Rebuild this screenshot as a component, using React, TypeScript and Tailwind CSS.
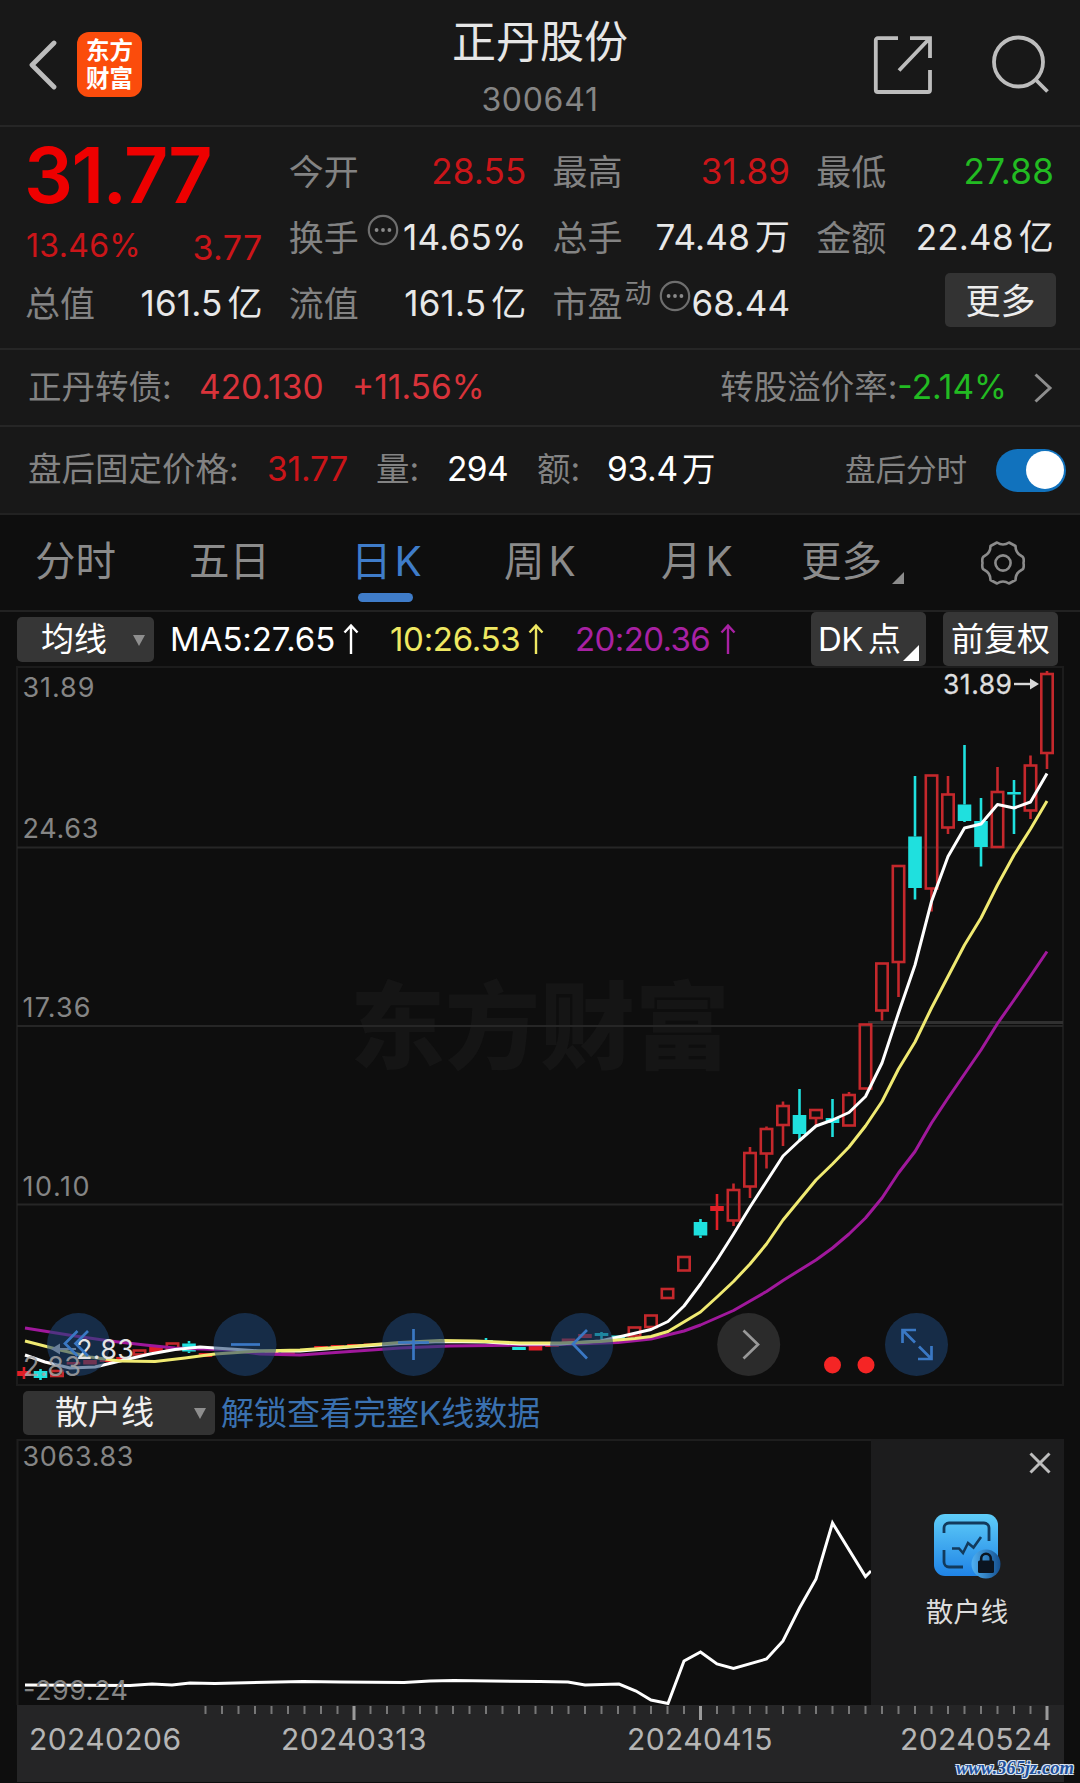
import React from "react"

type Candle = {
  // bars back from the latest trading day
  k: number
  tone: "up" | "down" | "flat"
  top: number
  bottom: number
  high?: number
  low?: number
}

const LAST_X = 1047
const STEP = 16.5

const candles: Candle[] = [
  { k: 0, tone: "up", top: 674, bottom: 753, high: 671, low: 769 },
  { k: 1, tone: "up", top: 765.5, bottom: 810.5, high: 755.5, low: 819 },
  { k: 2, tone: "down", top: 792, bottom: 794.5, high: 780, low: 834 },
  { k: 3, tone: "up", top: 792, bottom: 847, high: 767 },
  { k: 4, tone: "down", top: 821, bottom: 847, high: 798, low: 866.5 },
  { k: 5, tone: "down", top: 804.5, bottom: 821, high: 745, low: 822 },
  { k: 6, tone: "up", top: 794.5, bottom: 827.5, high: 776, low: 834 },
  { k: 7, tone: "up", top: 775.5, bottom: 888.5, low: 911.5 },
  { k: 8, tone: "down", top: 836.5, bottom: 888, high: 776, low: 899.5 },
  { k: 9, tone: "up", top: 866, bottom: 962, low: 997 },
  { k: 10, tone: "up", top: 963.5, bottom: 1010.5, low: 1020.5 },
  { k: 11, tone: "up", top: 1024.5, bottom: 1088.5 },
  { k: 12, tone: "up", top: 1095, bottom: 1125.5, high: 1092 },
  { k: 13, tone: "down", top: 1118, bottom: 1123, high: 1099, low: 1137 },
  { k: 14, tone: "up", top: 1110, bottom: 1118, low: 1125 },
  { k: 15, tone: "down", top: 1115, bottom: 1134, high: 1089, low: 1140 },
  { k: 16, tone: "up", top: 1106, bottom: 1125, high: 1101.5, low: 1146 },
  { k: 17, tone: "up", top: 1129, bottom: 1153.5, high: 1126.5, low: 1168.5 },
  { k: 18, tone: "up", top: 1153, bottom: 1186.5, high: 1147, low: 1198 },
  { k: 19, tone: "up", top: 1190, bottom: 1220.5, high: 1183.5, low: 1226 },
  { k: 20, tone: "flat", top: 1206, bottom: 1211, high: 1194, low: 1230 },
  { k: 21, tone: "down", top: 1222, bottom: 1235.5, high: 1219, low: 1238 },
  { k: 22, tone: "up", top: 1257, bottom: 1270.5 },
  { k: 23, tone: "up", top: 1289, bottom: 1298 },
  { k: 24, tone: "up", top: 1315.5, bottom: 1327 },
  { k: 25, tone: "up", top: 1327.5, bottom: 1336 },
  { k: 26, tone: "down", top: 1335.5, bottom: 1339.5 },
  { k: 27, tone: "down", top: 1333, bottom: 1336, high: 1332, low: 1339 },
  { k: 28, tone: "flat", top: 1334, bottom: 1338 },
  { k: 29, tone: "flat", top: 1338.5, bottom: 1342 },
  { k: 30, tone: "flat", top: 1344, bottom: 1347 },
  { k: 31, tone: "flat", top: 1345, bottom: 1350.5 },
  { k: 32, tone: "down", top: 1347, bottom: 1350 },
  { k: 34, tone: "down", top: 1340, bottom: 1342, high: 1338 },
  { k: 38, tone: "down", top: 1341.5, bottom: 1344, high: 1340 },
  { k: 39, tone: "flat", top: 1341, bottom: 1345 },
  { k: 41, tone: "flat", top: 1343.5, bottom: 1346 },
  { k: 42, tone: "flat", top: 1344, bottom: 1346.5 },
  { k: 43, tone: "flat", top: 1345, bottom: 1348 },
  { k: 44, tone: "flat", top: 1346, bottom: 1349 },
  { k: 46, tone: "flat", top: 1352.5, bottom: 1356 },
  { k: 47, tone: "flat", top: 1352, bottom: 1355 },
  { k: 51, tone: "flat", top: 1353, bottom: 1357 },
  { k: 52, tone: "down", top: 1343.5, bottom: 1351.5, high: 1341, low: 1353 },
  { k: 53, tone: "up", top: 1343.5, bottom: 1349 },
  { k: 54, tone: "flat", top: 1347, bottom: 1352 },
  { k: 55, tone: "up", top: 1350.5, bottom: 1354.5 },
  { k: 56, tone: "flat", top: 1357, bottom: 1360 },
  { k: 57, tone: "flat", top: 1359, bottom: 1362 },
  { k: 58, tone: "flat", top: 1360, bottom: 1364.5 },
  { k: 59, tone: "flat", top: 1362, bottom: 1364.5 },
  { k: 60, tone: "up", top: 1371, bottom: 1376 },
  { k: 61, tone: "down", top: 1371, bottom: 1378, high: 1369, low: 1380 },
  { k: 62, tone: "flat", top: 1371, bottom: 1376, high: 1367, low: 1379 }
]

const ma5: [number, number][] = [
  [25, 1355], [45, 1362], [70, 1368], [95, 1367], [120, 1361], [150, 1354], [175, 1349.5], [200, 1347],
  [230, 1349], [260, 1351], [300, 1351], [350, 1347], [400, 1343.5], [440, 1341.5], [485, 1342],
  [520, 1344], [560, 1344], [600, 1341], [623, 1336], [651, 1329.5], [668, 1321.5], [684, 1306],
  [700.5, 1284], [717, 1260], [733.5, 1234], [750, 1207], [766.5, 1181.5], [783, 1156], [799.5, 1140.5],
  [816, 1126], [832.5, 1120], [849, 1112.5], [865.5, 1096.5], [882, 1063], [898.5, 1013], [915, 965],
  [931.5, 901.5], [948, 856.5], [964.5, 828], [981, 824], [997.5, 804.5], [1014, 808], [1030.5, 802],
  [1047, 773.5]
]

const ma10: [number, number][] = [
  [25, 1341], [60, 1350], [90, 1357], [120, 1361], [155, 1361.5], [185, 1358], [215, 1354], [260, 1351],
  [300, 1350], [350, 1346.5], [400, 1342.5], [440, 1340.5], [475, 1341], [520, 1343], [560, 1343],
  [600, 1341.5], [635, 1338.5], [651, 1336.5], [668, 1331.5], [700.5, 1312], [717, 1297],
  [733.5, 1281.5], [750, 1264], [766.5, 1244], [783, 1220], [799.5, 1200], [816, 1180], [832.5, 1164],
  [849, 1147], [865.5, 1126], [882, 1101.5], [898.5, 1069], [915, 1042], [931.5, 1008], [948, 976.5],
  [964.5, 945], [981, 918], [997.5, 885], [1014, 855], [1030.5, 829], [1047, 801]
]

const ma20: [number, number][] = [
  [25, 1328], [75, 1336], [110, 1341], [145, 1345], [175, 1348], [230, 1350], [260, 1354], [300, 1355],
  [350, 1351.5], [400, 1348], [450, 1346], [520, 1345], [560, 1344.5], [618, 1342.5], [651, 1339],
  [684, 1331], [700.5, 1325], [733.5, 1310.5], [766.5, 1291.5], [783, 1280.5], [816, 1260],
  [832.5, 1248], [849, 1234], [865.5, 1218], [882, 1198], [898.5, 1173], [915, 1151.5], [931.5, 1123],
  [948, 1098], [964.5, 1074], [981, 1050], [997.5, 1023.5], [1014, 1000], [1030.5, 976], [1047, 951.5]
]

const retail: [number, number][] = [
  [25, 1685], [130, 1685.5], [152, 1684], [172, 1685], [190, 1683], [215, 1683.5], [303, 1681.5],
  [340, 1682], [404, 1682.5], [430, 1681], [454, 1680.5], [540, 1681.5], [568, 1682], [585, 1685],
  [619, 1684], [636, 1691], [651, 1700], [668, 1703.5], [684, 1661], [700.5, 1652], [717, 1664],
  [733.5, 1668.5], [766.5, 1659], [783, 1641], [799.5, 1608], [816, 1579], [832.5, 1523],
  [865.5, 1576.5], [871, 1571]
]

const toPoints = (pts: [number, number][]) => pts.map((p) => p.join(",")).join(" ")

function CandleShape({ c }: { c: Candle }) {
  const x = LAST_X - c.k * STEP
  const color = c.tone === "up" ? "#c4282c" : c.tone === "down" ? "#1fe0de" : "#e01f26"
  const hollow = c.tone === "up"
  return (
    <g stroke={color} strokeWidth="2.6" fill="none">
      {c.high !== undefined && <path d={`M${x} ${c.high}V${c.top}`} />}
      {c.low !== undefined && <path d={`M${x} ${c.bottom}V${c.low}`} />}
      {hollow ? (
        <rect x={x - 5.7} y={c.top} width="11.4" height={c.bottom - c.top} />
      ) : (
        <rect x={x - 6.8} y={c.top} width="13.6" height={c.bottom - c.top} fill={color} stroke="none" />
      )}
    </g>
  )
}

function MoreDots() {
  return (
    <svg viewBox="0 0 32 32" className="h-8 w-8 shrink-0" fill="none">
      <circle cx="16" cy="16" r="14.2" stroke="#6e6e6e" strokeWidth="2.2" />
      <g fill="#8a8a8a">
        <circle cx="9.6" cy="16" r="1.9" />
        <circle cx="16" cy="16" r="1.9" />
        <circle cx="22.4" cy="16" r="1.9" />
      </g>
    </svg>
  )
}

function Caret({ className }: { className: string }) {
  return (
    <svg viewBox="0 0 12 12" className={className}>
      <path d="M0 1h12L6 12z" fill="#8e8e8e" />
    </svg>
  )
}

function Header() {
  return (
    <header className="flex h-[127px] items-start justify-between border-b-2 border-[#262626]">
      <div className="flex w-[300px] items-center pt-8 pl-7">
        <svg viewBox="0 0 30 50" className="mr-[19px] h-[50px] w-[30px]" fill="none">
          <path d="M26 3L4 25L26 47" stroke="#bcbcbc" strokeWidth="4.8" strokeLinecap="round" strokeLinejoin="round" />
        </svg>
        <div className="flex h-[65px] w-[65px] flex-col items-center justify-center rounded-[12px] bg-[#fb4c0c] text-[23.5px] leading-[28px] font-bold text-white">
          <span>东方</span>
          <span>财富</span>
        </div>
      </div>
      <div className="flex flex-col items-center pt-5">
        <div className="text-[44px] leading-[44px] text-[#e6e6e6]">正丹股份</div>
        <div className="mt-5 text-[32px] leading-8 tracking-[0.7px] text-[#858585]">300641</div>
      </div>
      <div className="flex w-[300px] justify-end pt-[34px] pr-[30px]">
        <svg viewBox="0 0 60 60" className="mr-[58px] h-[60px] w-[60px]" fill="none" stroke="#bdbdbd" strokeWidth="3.8">
          <path d="M26 4.2H5.8a2 2 0 0 0-2 2V56a2 2 0 0 0 2 2H56a2 2 0 0 0 2-2V36" />
          <path d="M38 4.2H58V24M57.5 4.5L27 36.5" />
        </svg>
        <svg viewBox="0 0 60 60" className="h-[60px] w-[60px]" fill="none" stroke="#bdbdbd" strokeWidth="3.8">
          <circle cx="28.5" cy="28" r="24.5" />
          <path d="M45.5 45.5L57.5 57.5" />
        </svg>
      </div>
    </header>
  )
}

function Field({ label, value, tone }: { label: React.ReactNode; value: React.ReactNode; tone?: string }) {
  return (
    <div className="flex h-[66px] items-center justify-between text-[35px] leading-none">
      <span className="-ml-px flex items-center pt-[2px] text-[#838383]">{label}</span>
      <span className={`whitespace-nowrap tracking-[0.2px] [word-spacing:-5px] ${tone ?? "text-[#e8e8e8]"}`}>{value}</span>
    </div>
  )
}

function Quote() {
  return (
    <section className="flex h-[223px] gap-[27px] border-b-2 border-[#262626] pt-[11px] pr-[26px] pl-[26px]">
      <div className="flex w-[237px] flex-col">
        <div className="-ml-[2px] flex h-[75px] items-center text-[77px] leading-none font-semibold tracking-[-1.5px] text-[#ee0000]">
          31.77
        </div>
        <div className="flex h-[66px] items-center justify-between text-[32px] leading-none text-[#cb1519]">
          <span className="tracking-[0.3px]">13.46%</span>
          <span className="pt-[3px] text-[34px] tracking-[0.4px]">3.77</span>
        </div>
        <div className="-mt-[9px]">
          <Field label="总值" value="161.5 亿" />
        </div>
      </div>
      <div className="w-[237px]">
        <Field label="今开" value="28.55" tone="text-[#cb1519]" />
        <Field
          label={
            <>
              换手
              <span className="-mt-4 ml-2">
                <MoreDots />
              </span>
            </>
          }
          value="14.65%"
        />
        <Field label="流值" value="161.5 亿" />
      </div>
      <div className="w-[237px]">
        <Field label="最高" value="31.89" tone="text-[#cb1519]" />
        <Field label="总手" value="74.48 万" />
        <Field
          label={
            <>
              市盈
              <span className="-mt-[22px] ml-[2px] text-[27px]">动</span>
              <span className="-mt-4 ml-[7px]">
                <MoreDots />
              </span>
            </>
          }
          value="68.44"
        />
      </div>
      <div className="w-[237px]">
        <Field label="最低" value="27.88" tone="text-[#22bb22]" />
        <Field label="金额" value="22.48 亿" />
        <div className="flex justify-end pt-[3px]">
          <button type="button" className="-mr-[2px] h-[54px] w-[111px] rounded-[5px] bg-[#333333] pt-[2px] text-[35px] leading-none text-[#ededed]">
            更多
          </button>
        </div>
      </div>
    </section>
  )
}

function BondRow() {
  return (
    <section className="flex h-[77px] items-center border-b-2 border-[#262626] pr-[27px] pl-7 text-[33.5px] leading-none whitespace-nowrap text-[#838383]">
      <span className="w-[171px]">正丹转债:</span>
      <span className="w-[153px] text-[#d9333a]">420.130</span>
      <span className="text-[#d9333a]">+11.56%</span>
      <span className="ml-auto">转股溢价率:</span>
      <span className="text-[#22bb22]">-2.14%</span>
      <svg viewBox="0 0 20 30" className="ml-[26px] h-[30px] w-5" fill="none">
        <path d="M2.5 1.5L17 15L2.5 28.5" stroke="#8e8e8e" strokeWidth="3" />
      </svg>
    </section>
  )
}

function AfterHoursRow() {
  return (
    <section className="flex h-[88px] items-center border-b-2 border-[#222222] pr-[14px] pl-7 text-[33.5px] leading-none whitespace-nowrap text-[#838383]">
      <span className="w-[239px]">盘后固定价格:</span>
      <span className="w-[109px] tracking-[-0.2px] text-[#cb1519]">31.77</span>
      <span className="w-[71px]">量:</span>
      <span className="w-[90px] tracking-[-0.6px] text-white">294</span>
      <span className="w-[70px]">额:</span>
      <span className="tracking-[-0.3px] text-white [word-spacing:-5px]">93.4 万</span>
      <span className="ml-auto text-[30.5px]">盘后分时</span>
      <div className="ml-[29px] flex h-[43px] w-[70px] items-center justify-end rounded-full bg-[#1172bd] pr-[2px]">
        <div className="h-[38px] w-[38px] rounded-full bg-white" />
      </div>
    </section>
  )
}

function Tabs() {
  return (
    <nav className="flex h-[97px] items-center border-b-2 border-[#222222] pl-[35px] text-[40.5px] leading-none whitespace-nowrap text-[#8b8b8b]">
      <span className="w-[154px]">分时</span>
      <span className="w-[162px]">五日</span>
      <span className="relative w-[153px] text-[#3f7cc9]">
        日<span className="ml-[3px]">K</span>
        <span className="absolute top-[51px] left-[7px] h-[9px] w-[55px] rounded-full bg-[#3f7cc9]" />
      </span>
      <span className="w-[157px]">
        周<span className="ml-[4px]">K</span>
      </span>
      <span className="w-[140px]">
        月<span className="ml-[4px]">K</span>
      </span>
      <span>更多</span>
      <svg viewBox="0 0 12 12" className="mt-[30px] ml-[10px] h-3 w-3">
        <path d="M12 0V12H0z" fill="#8b8b8b" />
      </svg>
      <svg viewBox="0 0 46 46" className="ml-[76px] h-[46px] w-[46px]" fill="none" stroke="#8b8b8b" strokeWidth="2.6" strokeLinejoin="round">
        <path d="M17 2.5Q23 6.5 29 2.5L35.5 6Q35.5 13 41.500 16Q44.500 17 43.500 23Q44.500 29 41.500 30Q35.500 33 35.500 40L29 43.500Q23 39.500 17 43.500L10.500 40Q10.500 33 4.500 30Q1.500 29 2.500 23Q1.500 17 4.500 16Q10.500 13 10.500 6Z" />
        <circle cx="23" cy="23" r="7.6" />
      </svg>
    </nav>
  )
}

function UpArrow() {
  return (
    <svg viewBox="0 0 16 32" className="absolute top-0 right-0 h-8 w-4" fill="none" stroke="currentColor" strokeWidth="2.4">
      <path d="M8 31V3M1.500 9.500L8 2.500L14.500 9.500" />
    </svg>
  )
}

function IndicatorBar() {
  return (
    <section className="flex h-[54px] items-center pl-[17px] text-[33px] leading-8 whitespace-nowrap text-white">
      <div className="flex h-[45px] w-[137px] items-center rounded-[5px] bg-[#363636] pl-6">
        均线
        <Caret className="mt-[2px] ml-[26px] h-3 w-3" />
      </div>
      <div className="relative ml-4 w-[189px] tracking-[-0.1px]">
        MA5:27.65
        <UpArrow />
      </div>
      <div className="relative ml-[31px] w-[154px] tracking-[-0.3px] text-[#efe862]">
        10:26.53
        <UpArrow />
      </div>
      <div className="relative ml-[31px] w-[161px] tracking-[-0.6px] text-[#a821a3]">
        20:20.36
        <UpArrow />
      </div>
      <div className="relative ml-[75px] flex h-[54px] w-[115px] items-center rounded-[5px] bg-[#363636] pl-[7px] tracking-[-0.5px]">
        DK<span className="ml-[5px]">点</span>
        <svg viewBox="0 0 16 16" className="absolute right-[7px] bottom-[5px] h-4 w-4">
          <path d="M16 0V16H0z" fill="#fff" />
        </svg>
      </div>
      <div className="ml-[17px] flex h-[54px] w-[115px] items-center justify-center rounded-[5px] bg-[#363636]">前复权</div>
    </section>
  )
}

function KLineChart() {
  const axis = [
    { y: 687, v: "31.89", w: 72 },
    { y: 828, v: "24.63", w: 76 },
    { y: 1006.5, v: "17.36", w: 68 },
    { y: 1186, v: "10.10", w: 67 }
  ]
  return (
    <svg viewBox="0 666 1080 720" className="block h-[720px] w-[1080px]" fontFamily="Inter">
      <text x="350" y="1062" fontSize="95" fontWeight="900" fill="#151515" fontFamily="Noto Sans CJK SC" textLength="380">
        东方财富
      </text>
      <g stroke="#262626" strokeWidth="2" fill="none">
        <path d="M17 667H1063V1385H17z" stroke="#1c1c1c" />
        <path d="M17 847.5H1063M17 1026H1063M17 1204.5H1063" />
        <path d="M868 1022.5H1063" stroke="#303030" strokeWidth="3" />
      </g>
      <g fontSize="27" fill="#858585">
        {axis.map((a) => (
          <text key={a.v} x="22.5" y={a.y + 10} textLength={a.w}>
            {a.v}
          </text>
        ))}
      </g>
      {candles.map((c) => (
        <CandleShape key={c.k} c={c} />
      ))}
      <g fill="none" strokeWidth="3" strokeLinejoin="round">
        <polyline points={toPoints(ma20)} stroke="#a0189c" />
        <polyline points={toPoints(ma5)} stroke="#ffffff" />
        <polyline points={toPoints(ma10)} stroke="#f0ea72" />
      </g>
      <text x="943" y="693.5" fontSize="26.5" fill="#dedede" stroke="#dedede" strokeWidth="0.3" textLength="69">
        31.89
      </text>
      <path d="M1014 684H1032" stroke="#d8d8d8" strokeWidth="2.4" />
      <path d="M1030 678.5L1039 684L1030 689.5z" fill="#d8d8d8" />
      <path d="M60 1349H76" stroke="#cfcfcf" strokeWidth="2" />
      <path d="M60 1343.5L51 1349L60 1354.5z" fill="#cfcfcf" />

      <g fill="#1d4372" fillOpacity="0.58">
        <circle cx="78.5" cy="1344.5" r="31.5" />
        <circle cx="245" cy="1344.5" r="31.5" />
        <circle cx="413.5" cy="1344.5" r="31.5" />
        <circle cx="581.7" cy="1344.5" r="31.5" />
        <circle cx="916.5" cy="1344.5" r="31.5" />
      </g>
      <text x="76" y="1359" fontSize="27" fill="#e4e4e4" textLength="58">
        2.83
      </text>
      <circle cx="748.7" cy="1344.5" r="31.5" fill="#2b2b2b" />
      <g fill="none" stroke="#3a78c4" strokeWidth="2.7">
        <path d="M77.5 1331L65 1343.5L77.5 1356M88 1331L75.5 1343.5L88 1356" />
        <path d="M231 1344.5H260" />
        <path d="M398 1342.5H429M413.5 1329V1360" />
        <path d="M587 1330L573 1344L587 1358.5" />
        <path d="M902.5 1343V1330H916M903 1330.5L915 1342.5M918 1359H931.5V1346M931 1358.5L919 1346.5" />
      </g>
      <path d="M743.5 1330.5L758 1344.5L743.5 1358.5" fill="none" stroke="#999999" strokeWidth="2.7" />
      <circle cx="832.5" cy="1365" r="8.5" fill="#f52525" />
      <circle cx="866" cy="1365" r="8.5" fill="#f52525" />
      <text x="23" y="1375.5" fontSize="27" fill="#a6a6a6" fillOpacity="0.85" textLength="58">
        2.83
      </text>
    </svg>
  )
}

function LockedBar() {
  return (
    <section className="flex h-[53px] items-center pl-[23px] text-[33px] leading-none whitespace-nowrap">
      <div className="flex h-11 w-[192px] items-center rounded-[5px] bg-[#333333] pl-8 text-[#f0f0f0]">
        散户线
        <Caret className="ml-[40px] h-3 w-3" />
      </div>
      <span className="ml-[6px] pt-px text-[#3a71b0]">解锁查看完整K线数据</span>
    </section>
  )
}

function RetailChart() {
  return (
    <section className="flex h-[266px]">
      <svg viewBox="0 1439 871 266" className="block h-[266px] w-[871px]" fontFamily="Inter">
        <path d="M17.5 1705V1440H871" fill="none" stroke="#1e1e1e" strokeWidth="2" />
        <polyline points={toPoints(retail)} fill="none" stroke="#ffffff" strokeWidth="3" />
        <g fontSize="27" fill="#858585">
          <text x="22.5" y="1466" textLength="111">
            3063.83
          </text>
          <text x="23" y="1699.5" textLength="105">
            -299.24
          </text>
        </g>
      </svg>
      <div className="relative flex w-[193px] flex-col items-center bg-[#1c1c1d] pt-[72px] pr-[1px]">
        <svg viewBox="0 0 22 22" className="absolute top-[13px] right-[13px] h-[22px] w-[22px]" stroke="#bdbdbd" strokeWidth="3">
          <path d="M1.5 1.5L20.5 20.5M20.5 1.5L1.5 20.5" />
        </svg>
        <svg viewBox="0 0 68 68" className="h-[68px] w-[68px]" fill="none">
          <defs>
            <linearGradient id="tile" x1="0" y1="0" x2="0" y2="1">
              <stop offset="0" stopColor="#5fcdf8" />
              <stop offset="1" stopColor="#1f83e6" />
            </linearGradient>
            <linearGradient id="badge" x1="0" y1="0" x2="1" y2="0">
              <stop offset="0" stopColor="#4fb0f2" />
              <stop offset="1" stopColor="#155090" />
            </linearGradient>
          </defs>
          <rect x="1" y="3" width="64" height="62" rx="11" fill="url(#tile)" />
          <g stroke="#123a5c" strokeWidth="2.8">
            <path d="M11 22V17a5 5 0 0 1 5-5H51a5 5 0 0 1 5 5V30" />
            <path d="M11 39V51a5 5 0 0 0 5 5H30" />
            <path d="M19 37.5H26L30 42L35 32L40.5 36.5L48 26" strokeWidth="2.6" />
          </g>
          <circle cx="53" cy="53" r="14.5" fill="url(#badge)" />
          <rect x="45" y="49.5" width="16" height="12.5" rx="1.5" fill="#0b1420" />
          <path d="M48.2 50V47.5a4.8 4.8 0 0 1 9.6 0V50" stroke="#0b1420" strokeWidth="2.6" />
        </svg>
        <div className="mt-5 text-[27.5px] leading-none text-[#dcdcdc]">散户线</div>
      </div>
    </section>
  )
}

function DateAxis() {
  const ticks = Array.from({ length: 52 }, (_, i) => i)
  return (
    <section className="relative ml-[17px] h-[77px] w-[1047px] bg-[#252526]">
      <svg viewBox="17 1705 1047 16" className="block h-4 w-[1047px]">
        {ticks.map((i) => {
          const major = i % 21 === 0
          return (
            <path
              key={i}
              d={`M${LAST_X - i * STEP} 1706V${major ? 1720 : 1714}`}
              stroke={major ? "#9a9a9a" : "#777777"}
              strokeWidth={major ? 3 : 2}
            />
          )
        })}
      </svg>
      <div className="flex items-center pt-[3px] pl-3 text-[30px] leading-[30px] tracking-[0.4px] text-[#b5b5b5]">
        <span className="w-[252px]">20240206</span>
        <span className="w-[346px]">20240313</span>
        <span className="w-[273px]">20240415</span>
        <span>20240524</span>
      </div>
      <div className="absolute right-[-10px] bottom-0 font-['Liberation_Serif'] text-[18.6px] leading-7 font-bold text-[#20509c] italic [text-shadow:-1px_-1px_0_#dce6f2,1px_-1px_0_#dce6f2,-1px_1px_0_#dce6f2,1px_1px_0_#dce6f2]">
        www.365jz.com
      </div>
    </section>
  )
}

export default function App() {
  return (
    <div className="h-[1783px] w-[1080px] overflow-hidden bg-[#0e0e0e] font-['Inter','Noto_Sans_CJK_SC',sans-serif] font-[380]">
      <div className="bg-[#181818]">
        <Header />
        <Quote />
        <BondRow />
        <AfterHoursRow />
      </div>
      <Tabs />
      <IndicatorBar />
      <KLineChart />
      <LockedBar />
      <RetailChart />
      <DateAxis />
    </div>
  )
}
